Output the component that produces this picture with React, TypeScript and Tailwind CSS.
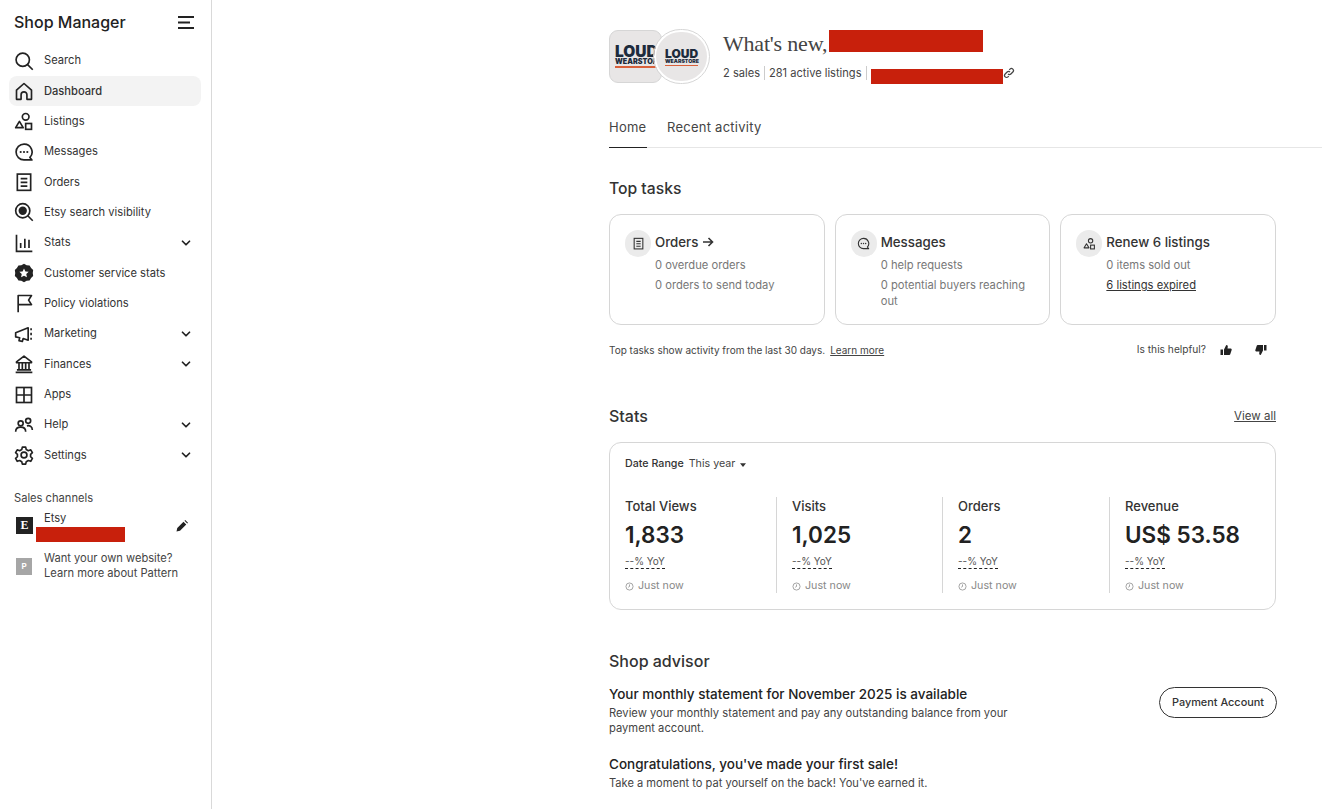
import React from 'react';
import { ChevronDown } from 'lucide-react';

type IconProps = { className?: string };

const svgProps = {
  viewBox: '0 0 24 24',
  fill: 'none',
  stroke: 'currentColor',
  strokeWidth: 2,
};

const SearchIcon = ({ className }: IconProps) => (
  <svg {...svgProps} className={className}>
    <circle cx="10.5" cy="10.5" r="8" />
    <path d="M16 16l6.500 6.500" />
  </svg>
);
const HomeIcon = ({ className }: IconProps) => (
  <svg {...svgProps} className={className}>
    <path d="M3 22V11l9-8 9 8v11h-5.500v-5.500a3.500 3.500 0 0 0-7 0V22z" strokeLinejoin="round" />
  </svg>
);
const ListingsIcon = ({ className }: IconProps) => (
  <svg {...svgProps} className={className}>
    <circle cx="14" cy="7" r="4" />
    <rect x="14" y="15" width="7" height="7" />
    <path d="M6.500 12.500L11 20H2z" strokeLinejoin="round" />
  </svg>
);
const MessagesIcon = ({ className }: IconProps) => (
  <svg {...svgProps} className={className}>
    <path d="M12 2.500a9.500 9.500 0 1 0 0 19h9.500l-2.400-3A9.500 9.500 0 0 0 12 2.500z" strokeLinejoin="round" />
    <circle cx="8" cy="12" r="1.300" fill="currentColor" stroke="none" />
    <circle cx="12" cy="12" r="1.300" fill="currentColor" stroke="none" />
    <circle cx="16" cy="12" r="1.300" fill="currentColor" stroke="none" />
  </svg>
);
const OrdersIcon = ({ className }: IconProps) => (
  <svg {...svgProps} className={className}>
    <rect x="4" y="2.500" width="16" height="19.500" />
    <path d="M8 8h8M8 12.500h8M8 17h8" />
  </svg>
);
const VisibilityIcon = ({ className }: IconProps) => (
  <svg {...svgProps} className={className}>
    <circle cx="10.500" cy="10.500" r="8.500" />
    <circle cx="10.500" cy="10.500" r="5" fill="currentColor" stroke="none" />
    <path d="M16.500 16.500l6 6" />
  </svg>
);
const StatsIcon = ({ className }: IconProps) => (
  <svg {...svgProps} className={className}>
    <path d="M3 2v20h19M8 18v-6M13 18V7M18 18V8" />
  </svg>
);
const StarBadgeIcon = ({ className }: IconProps) => (
  <svg viewBox="0 0 24 24" className={className}>
    <path
      fillRule="evenodd"
      fill="currentColor"
      d="M12 1l3.200 1.700 3.500.3 1.800 3 2.500 2.300-.5 3.700.5 3.700-2.500 2.300-1.800 3-3.500.3L12 23l-3.200-1.700-3.500-.3-1.800-3L1 15.700l.5-3.700L1 8.300 3.500 6l1.800-3 3.500-.3zM12 6.500l1.700 3.600 3.900.500-2.900 2.700.8 3.900-3.500-2-3.500 2 .8-3.900-2.900-2.700 3.900-.500z"
    />
  </svg>
);
const FlagIcon = ({ className }: IconProps) => (
  <svg {...svgProps} className={className}>
    <path d="M5 23V3h16l-3.500 5.500L21 14H5" strokeLinejoin="round" />
  </svg>
);
const MegaphoneIcon = ({ className }: IconProps) => (
  <svg {...svgProps} className={className}>
    <path d="M2 10.500l15-6v15l-6-2-1 3.500-4-1 .8-3.500L2 15.500z" strokeLinejoin="round" />
    <path d="M20.500 5v2.500M20.500 10.500v3M20.500 16.500V19" />
  </svg>
);
const BankIcon = ({ className }: IconProps) => (
  <svg {...svgProps} className={className}>
    <path d="M3 9.500L12 2.500l9 7v1H3zM2 22h20M3.500 19h17M6 11v8M10 11v8M14 11v8M18 11v8" strokeLinejoin="round" />
  </svg>
);
const AppsIcon = ({ className }: IconProps) => (
  <svg {...svgProps} className={className}>
    <rect x="3" y="3" width="18" height="18" />
    <path d="M12 3v18M3 12h18" />
  </svg>
);
const HelpIcon = ({ className }: IconProps) => (
  <svg {...svgProps} className={className}>
    <circle cx="8" cy="10" r="3" />
    <circle cx="17" cy="7" r="3" />
    <path d="M2 20c0-3.500 2.500-5.500 6-5.500s6 2 6 5.500M15.500 13c3.500-.8 6.500 1 6.500 5" />
  </svg>
);
const GearIcon = ({ className }: IconProps) => (
  <svg {...svgProps} className={className}>
    <circle cx="12" cy="12" r="3.500" />
    <path
      d="M10 2.500h4l.7 3 2.500 1.300 2.900-1 2 3.400-2.200 2.100v2.800l2.200 2-2 3.500-2.900-1-2.500 1.400-.7 3h-4l-.7-3-2.500-1.400-2.900 1-2-3.500 2.200-2v-2.800L1.900 9.200l2-3.400 2.900 1 2.500-1.300z"
      strokeLinejoin="round"
    />
  </svg>
);
const PencilIcon = ({ className }: IconProps) => (
  <svg viewBox="0 0 24 24" fill="currentColor" className={className}>
    <path d="M1 23l1.500-7L15 3.500l5.500 5.500L8 21.500zM17 1.500l1.500-1.500 5.500 5.500-1.500 1.500z" />
  </svg>
);
const ThumbUp = ({ className }: IconProps) => (
  <svg viewBox="0 0 24 24" fill="currentColor" className={className}>
    <path d="M1 11h5v11H1zM8 11l4.500-9c2.500 0 3.500 1.500 3 4L15 9h6.500c1.500 0 2.200 1.500 1.800 2.800L20.500 20.500c-.3 1-1 1.500-2 1.500H8z" />
  </svg>
);
const ThumbDown = ({ className }: IconProps) => (
  <svg viewBox="0 0 24 24" fill="currentColor" className={className}>
    <path d="M23 13h-5V2h5zM16 13l-4.500 9c-2.500 0-3.500-1.500-3-4L9 15H2.500C1 15 .3 13.500.7 12.200L3.500 3.500c.3-1 1-1.500 2-1.500H16z" />
  </svg>
);
const ClockIcon = ({ className }: IconProps) => (
  <svg {...svgProps} className={className}>
    <circle cx="12" cy="12" r="9.500" />
    <path d="M12 6.500V12l-3.500 2" />
  </svg>
);
const LinkIcon = ({ className }: IconProps) => (
  <svg {...svgProps} strokeWidth={2.500} className={className}>
    <path d="M10 14a4 4 0 0 0 5.700 0l4-4A4 4 0 0 0 14 4.300l-1.500 1.500" />
    <path d="M14 10a4 4 0 0 0-5.700 0l-4 4A4 4 0 0 0 10 19.700l1.500-1.500" />
  </svg>
);
const ArrowIcon = ({ className }: IconProps) => (
  <svg {...svgProps} strokeWidth={3.200} className={className}>
    <path d="M2 12h19M13 4l8 8-8 8" />
  </svg>
);

const navItems = [
  { label: 'Search', icon: SearchIcon },
  { label: 'Dashboard', icon: HomeIcon, active: true },
  { label: 'Listings', icon: ListingsIcon },
  { label: 'Messages', icon: MessagesIcon },
  { label: 'Orders', icon: OrdersIcon },
  { label: 'Etsy search visibility', icon: VisibilityIcon },
  { label: 'Stats', icon: StatsIcon, chevron: true },
  { label: 'Customer service stats', icon: StarBadgeIcon },
  { label: 'Policy violations', icon: FlagIcon },
  { label: 'Marketing', icon: MegaphoneIcon, chevron: true },
  { label: 'Finances', icon: BankIcon, chevron: true },
  { label: 'Apps', icon: AppsIcon },
  { label: 'Help', icon: HelpIcon, chevron: true },
  { label: 'Settings', icon: GearIcon, chevron: true },
];

const statCols = [
  { label: 'Total Views', value: '1,833' },
  { label: 'Visits', value: '1,025' },
  { label: 'Orders', value: '2' },
  { label: 'Revenue', value: 'US$ 53.58' },
];

const Redacted = ({ className }: IconProps) => <div className={`bg-[#c8200c] ${className}`} />;

const Sidebar = () => (
  <aside className="w-[212px] shrink-0 border-r border-[#d9d9d9] h-full">
    <div className="flex items-center justify-between pl-[14px] pr-[17px] pb-[2px] h-[46px]">
      <span className="text-[16px] font-medium text-[#222]">Shop Manager</span>
      <svg viewBox="0 0 16 13" className="w-[16px] h-[13px]" stroke="#222" strokeWidth="2">
        <path d="M0 1h16M0 6.500h12M0 12h16" />
      </svg>
    </div>
    <nav className="mt-[-0.45px] pl-[9px] pr-[10px]">
      {navItems.map(({ label, icon: Icon, active, chevron }) => (
        <div
          key={label}
          className={`flex items-center h-[30.35px] pl-[5px] pr-[8px] rounded-lg text-[11.15px] text-[#333] ${
            active ? 'bg-[#f3f3f3] font-medium text-[#222]' : ''
          }`}
        >
          <Icon className="w-[20px] h-[20px] text-[#222] shrink-0" />
          <span className="ml-[10px] flex-1">{label}</span>
          {chevron && <ChevronDown className="w-[14px] h-[14px] text-[#222]" strokeWidth={3} />}
        </div>
      ))}
    </nav>
    <div className="mt-[19.5px] pl-[14px] text-[11.15px] text-[#444] leading-[16px]">Sales channels</div>
    <div className="mt-[5px] pl-[16px] pr-[23px] flex items-start">
      <div className="mt-[6px] w-[17px] h-[17px] bg-[#222] text-white text-[12px] font-bold leading-[17px] text-center font-['Liberation_Serif',serif]">
        E
      </div>
      <div className="ml-[3px] flex-1">
        <div className="pl-[8px] text-[11.15px] text-[#333] leading-[14px]">Etsy</div>
        <Redacted className="w-[89px] h-[15px] mt-[2px]" />
      </div>
      <PencilIcon className="mt-[9px] w-[12px] h-[12px] text-[#222]" />
    </div>
    <div className="mt-[9.5px] pl-[16px] flex items-start">
      <div className="mt-[7px] w-[16px] h-[17px] bg-[#a6a6a6] text-white text-[8px] font-bold leading-[17px] text-center">
        P
      </div>
      <div className="ml-[12px] text-[11.15px] text-[#444] leading-[15px]">
        <div>Want your own website?</div>
        <div>Learn more about Pattern</div>
      </div>
    </div>
  </aside>
);

const TaskCard = ({
  icon: Icon,
  title,
  children,
}: {
  icon: React.FC<IconProps>;
  title: React.ReactNode;
  children: React.ReactNode;
}) => (
  <div className="flex-1 h-[111px] border border-[#d6d6d6] rounded-[12px] pl-[15px] pr-[14px] pt-[15px] flex items-start">
    <div className="w-[26px] h-[27px] rounded-full bg-[#ebebeb] flex items-center justify-center shrink-0">
      <Icon className="w-[13px] h-[13px] text-[#333]" />
    </div>
    <div className="ml-[4px]">
      <div className="flex items-center text-[13.3px] font-medium text-[#333] leading-[24px]">{title}</div>
      <div className="text-[11.2px] text-[#777] leading-[16px] mt-[3px]">{children}</div>
    </div>
  </div>
);

const Logo = ({ small }: { small?: boolean }) => (
  <div className={`font-black text-[#1d2b3c] text-left ${small ? 'w-[33px]' : 'w-[46px]'}`}>
    <div className={small ? 'text-[12px] leading-[11px]' : 'text-[15.5px] leading-[14px]'}>LOUD</div>
    <div className={small ? 'text-[5.2px] leading-[5px]' : 'text-[7.2px] leading-[6px]'}>WEARSTORE</div>
    <div className={`bg-[#d9603a] mt-[1px] ${small ? 'h-[1px]' : 'h-[2px]'}`} />
  </div>
);

const Header = () => (
  <div className="flex items-start pt-[30px] pl-[397px]">
    <div className="relative w-[100px] h-[54px] shrink-0">
      <div className="w-[53px] h-[53px] rounded-[9px] bg-[#e8e6e6] border border-[#d6d6d6] flex items-center pl-[5px]">
        <Logo />
      </div>
      <div className="absolute left-[45px] top-0 w-[55px] h-[53px] rounded-full bg-[#e8e6e6] border-2 border-white outline outline-[#d6d6d6] flex items-center justify-center">
        <Logo small />
      </div>
    </div>
    <div className="ml-[14px]">
      <div className="flex items-start h-[28px]">
        <span className="font-['Liberation_Serif',serif] text-[22px] tracking-[-0.2px] leading-[28px] text-[#444]">What's new,</span>
        <Redacted className="w-[154px] h-[22px] ml-[2px]" />
      </div>
      <div className="flex items-center mt-[6px] h-[18px] text-[11.1px] text-[#444]">
        <span>2 sales</span>
        <span className="mx-[4px] w-px h-[14px] bg-[#ccc]" />
        <span>281 active listings</span>
        <span className="ml-[4px] mr-[4px] w-px h-[14px] bg-[#ccc]" />
        <Redacted className="w-[132px] h-[15px] mt-[6px]" />
        <LinkIcon className="w-[12px] h-[12px] text-[#444]" />
      </div>
    </div>
  </div>
);

const Tabs = () => (
  <div className="ml-[397px] mt-[27px] h-[37px] border-b border-[#e6e6e6] flex items-start text-[13px] text-[#444] tracking-[0.25px]">
    <div className="h-[37px] border-b border-[#222] pt-[7px] leading-[18px] w-[38px]">Home</div>
    <div className="ml-[20px] pt-[7px] leading-[18px]">Recent activity</div>
  </div>
);

const StatsCard = () => (
  <div className="mt-[16px] h-[168px] border border-[#d6d6d6] rounded-[12px] px-[15px] pt-[13px]">
    <div className="flex items-center h-[17px] text-[10.7px]">
      <span className="font-medium text-[#333]">Date Range</span>
      <span className="ml-[5px] text-[#444]">This year</span>
      <svg viewBox="0 0 8 5" className="ml-[5px] w-[6px] h-[4px]"><path d="M0 0h8L4 5z" fill="#333" /></svg>
    </div>
    <div className="mt-[24px] grid grid-cols-[151px_166px_167px_1fr]">
      {statCols.map((col, i) => (
        <div key={col.label} className={`h-[96px] ${i > 0 ? 'border-l border-[#d6d6d6] pl-[15px]' : ''}`}>
          <div className="text-[13px] font-medium text-[#333] leading-[16px] mt-[1px]">{col.label}</div>
          <div className="text-[22.5px] font-semibold text-[#222] leading-[28px] mt-[7px]">{col.value}</div>
          <div className="mt-[5px] text-[10px] text-[#555] leading-[14px] w-fit border-b border-dashed border-[#222]">--% YoY</div>
          <div className="mt-[10px] flex items-center text-[10.7px] text-[#888] leading-[14px]">
            <ClockIcon className="w-[9px] h-[9px] mr-[4px]" />
            Just now
          </div>
        </div>
      ))}
    </div>
  </div>
);

export default function App() {
  return (
    <div className="flex w-[1322px] h-[809px] overflow-hidden bg-white font-['Inter',sans-serif]">
      <Sidebar />
      <main className="flex-1">
        <Header />
        <Tabs />
        <div className="ml-[397px] mr-[46px]">
          <h2 className="mt-[31px] text-[15.7px] font-medium text-[#333] leading-[20px]">Top tasks</h2>
          <div className="mt-[15px] flex gap-[10px]">
            <TaskCard
              icon={OrdersIcon}
              title={
                <>
                  Orders
                  <ArrowIcon className="ml-[4px] w-[12px] h-[12px]" />
                </>
              }
            >
              <div>0 overdue orders</div>
              <div className="mt-[4px]">0 orders to send today</div>
            </TaskCard>
            <TaskCard icon={MessagesIcon} title="Messages">
              <div>0 help requests</div>
              <div className="mt-[4px]">0 potential buyers reaching out</div>
            </TaskCard>
            <TaskCard icon={ListingsIcon} title="Renew 6 listings">
              <div>0 items sold out</div>
              <div className="mt-[4px] text-[#333] underline">6 listings expired</div>
            </TaskCard>
          </div>
          <div className="mt-[16px] flex items-center h-[18px] text-[10px] text-[#444]">
            <span>Top tasks show activity from the last 30 days.</span>
            <span className="ml-[5px] underline">Learn more</span>
            <span className="ml-auto text-[10.2px]">Is this helpful?</span>
            <ThumbUp className="ml-[14px] w-[12px] h-[12px] text-[#222]" />
            <ThumbDown className="ml-[23px] mr-[9px] w-[12px] h-[12px] text-[#222]" />
          </div>
          <div className="mt-[47px] flex items-center justify-between h-[20px]">
            <h2 className="text-[16px] font-medium text-[#333]">Stats</h2>
            <span className="mt-[1px] text-[11.5px] text-[#444] underline">View all</span>
          </div>
          <StatsCard />
          <h2 className="mt-[41px] text-[16px] font-medium text-[#333] leading-[20px]">Shop advisor</h2>
          <div className="mt-[15px] flex items-start justify-between">
            <div className="w-[430px]">
              <div className="text-[13.5px] font-medium text-[#222] leading-[16px]">Your monthly statement for November 2025 is available</div>
              <div className="mt-[4px] text-[11.2px] text-[#444] leading-[15px]">
                Review your monthly statement and pay any outstanding balance from your payment account.
              </div>
            </div>
            <button className="mt-[1px] mr-[-1px] w-[118px] h-[31px] border border-[#333] rounded-full text-[10.9px] font-medium text-[#333]">
              Payment Account
            </button>
          </div>
          <div className="mt-[20px] text-[13.5px] font-medium text-[#222] leading-[16px]">Congratulations, you've made your first sale!</div>
          <div className="mt-[4px] text-[11.1px] text-[#444] leading-[15px]">Take a moment to pat yourself on the back! You've earned it.</div>
        </div>
      </main>
    </div>
  );
}
